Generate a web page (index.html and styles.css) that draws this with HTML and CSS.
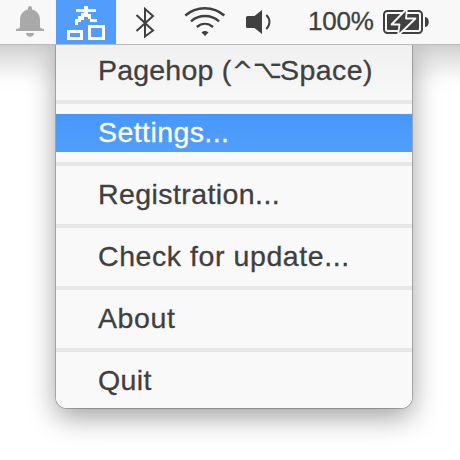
FILE: index.html
```html
<!DOCTYPE html>
<html lang="en">
<head>
<meta charset="utf-8">
<title>Pagehop menu</title>
<link rel="stylesheet" href="styles.css">
</head>
<body>
<header class="menubar">
  <span class="slot bell"><svg width="56" height="44" viewBox="0 0 56 44"><path fill="#a9a9a9" d="M28 8a2 2 0 0 1 4 0v1.500c5 1.200 8 5 8 10.500v6.500c0 1.500 1.200 2.500 4 2.500v2H16v-2c2.800 0 4-1 4-2.500V20c0-5.500 3-9.300 8-10.500zM26 33h8c0 5-8 5-8 0z"/></svg></span>
  <span class="slot active"><svg width="60" height="44" viewBox="56 0 60 44" shape-rendering="crispEdges"><path fill="#fff" d="M84 6h4v3h8v3h-8v2h3v5h6v3h-7v-3h-2v-2h-4v3h-3v2h-3v3h-3v-6h3v-3h3v-3h3v-1h-8V9h8z"/><path fill="none" stroke="#fff" stroke-width="3" d="M68.500 31.500h13v7h-13zM89.500 26.500h14v12h-14z"/></svg></span>
  <span class="slot"><svg width="172" height="44" viewBox="116 0 172 44" fill="none" stroke="#404040" stroke-width="2"><path d="M136.500 15l16.500 15.500-8 6V9l8 7L136.500 31"/><path stroke-width="2.400" d="M185.300 15.500c11-9.700 28-9.700 39 0M191 21.300c8-7 20-7 28 0M196.800 27c5-4.200 11.200-4.200 16.200 0"/><path fill="#404040" stroke="none" d="M201.500 32.500c2-2 5-2 7 0L205 36z"/><path fill="#404040" stroke="none" d="M247.500 16h7l7.500-6v24l-7.500-6h-7a1.500 1.500 0 0 1-1.500-1.500v-9a1.500 1.500 0 0 1 1.500-1.500z"/><path d="M266.300 15c4.200 4 4.200 10 0 14"/></svg></span>
  <span class="percent">100%</span>
  <span class="slot battery"><svg width="48" height="44" viewBox="382 0 48 44"><rect x="384" y="11" width="38" height="22" rx="3.500" fill="none" stroke="#404040" stroke-width="2"/><rect x="387" y="14" width="32" height="16" rx="1" fill="#404040"/><path fill="#404040" stroke="#f8f8f8" stroke-width="1.800" stroke-linejoin="round" d="M407 8.500L391.500 24.500h8L398 35.500 415.500 18.500H406z"/><path fill="#404040" d="M425 17c5 0 5 10 0 10z"/></svg></span>
</header>
<main class="desktop">
  <nav class="menu">
    <div class="item"><span class="lead">Pagehop (</span><span class="key ctrl">^</span><span class="key opt">⌥</span><span>Space)</span></div>
    <div class="rule"></div>
    <div class="item selected">Settings...</div>
    <div class="rule"></div>
    <div class="item">Registration...</div>
    <div class="rule"></div>
    <div class="item update">Check for update...</div>
    <div class="rule"></div>
    <div class="item about">About</div>
    <div class="rule"></div>
    <div class="item">Quit</div>
  </nav>
</main>
</body>
</html>
```
FILE: styles.css
```css
* { box-sizing: border-box; }
body {
  margin: 0;
  width: 460px;
  height: 460px;
  overflow: hidden;
  background: #fff;
  color: #404040;
  font-family: "Liberation Sans", Arial, sans-serif;
}
svg { display: block; }
.menubar {
  display: flex;
  height: 45px;
  background: #f8f8f8;
  border-bottom: 1px solid #b8b8b8;
}
.slot { flex: none; }
.active { background: #529dfc; }
.percent {
  flex: none;
  width: 94px;
  padding-left: 20px;
  font-size: 26px;
  line-height: 43px;
  letter-spacing: -0.2px;
  -webkit-text-stroke: 0.3px currentColor;
}
.desktop {
  height: 415px;
  padding-left: 56px;
  background: linear-gradient(#d0d0d0, #e4e4e4 14px, #fafafa 34px, #fff 46px);
}
.menu {
  width: 356px;
  height: 363px;
  padding-top: 7px;
  background: linear-gradient(#f0f0f0, #f9f9f9 60px);
  border-radius: 0 0 11px 11px;
  box-shadow: 0 0 0 1px rgba(0,0,0,.22), 0 9px 28px rgba(0,0,0,.38);
  clip-path: inset(0 -60px -60px -60px);
}
.item {
  display: flex;
  height: 38px;
  padding-left: 42px;
  font-size: 28.5px;
  line-height: 36px;
  letter-spacing: 0.42px;
  white-space: pre;
  -webkit-text-stroke: 0.3px currentColor;
}
.update { letter-spacing: 0.57px; }
.about { letter-spacing: 0.6px; }
.selected {
  background: linear-gradient(#4897fb, #509ffc);
  color: #fff;
}
.rule {
  height: 4px;
  margin: 10px 0;
  background: #e7e7e7;
}
.lead { width: 134px; letter-spacing: 0.2px; }
.key { font-family: "DejaVu Sans", sans-serif; }
.ctrl {
  width: 21px;
  font-size: 25px;
  line-height: 37px;
}
.opt {
  width: 27px;
  font-size: 25px;
  line-height: 36px;
  letter-spacing: 0;
}
```
